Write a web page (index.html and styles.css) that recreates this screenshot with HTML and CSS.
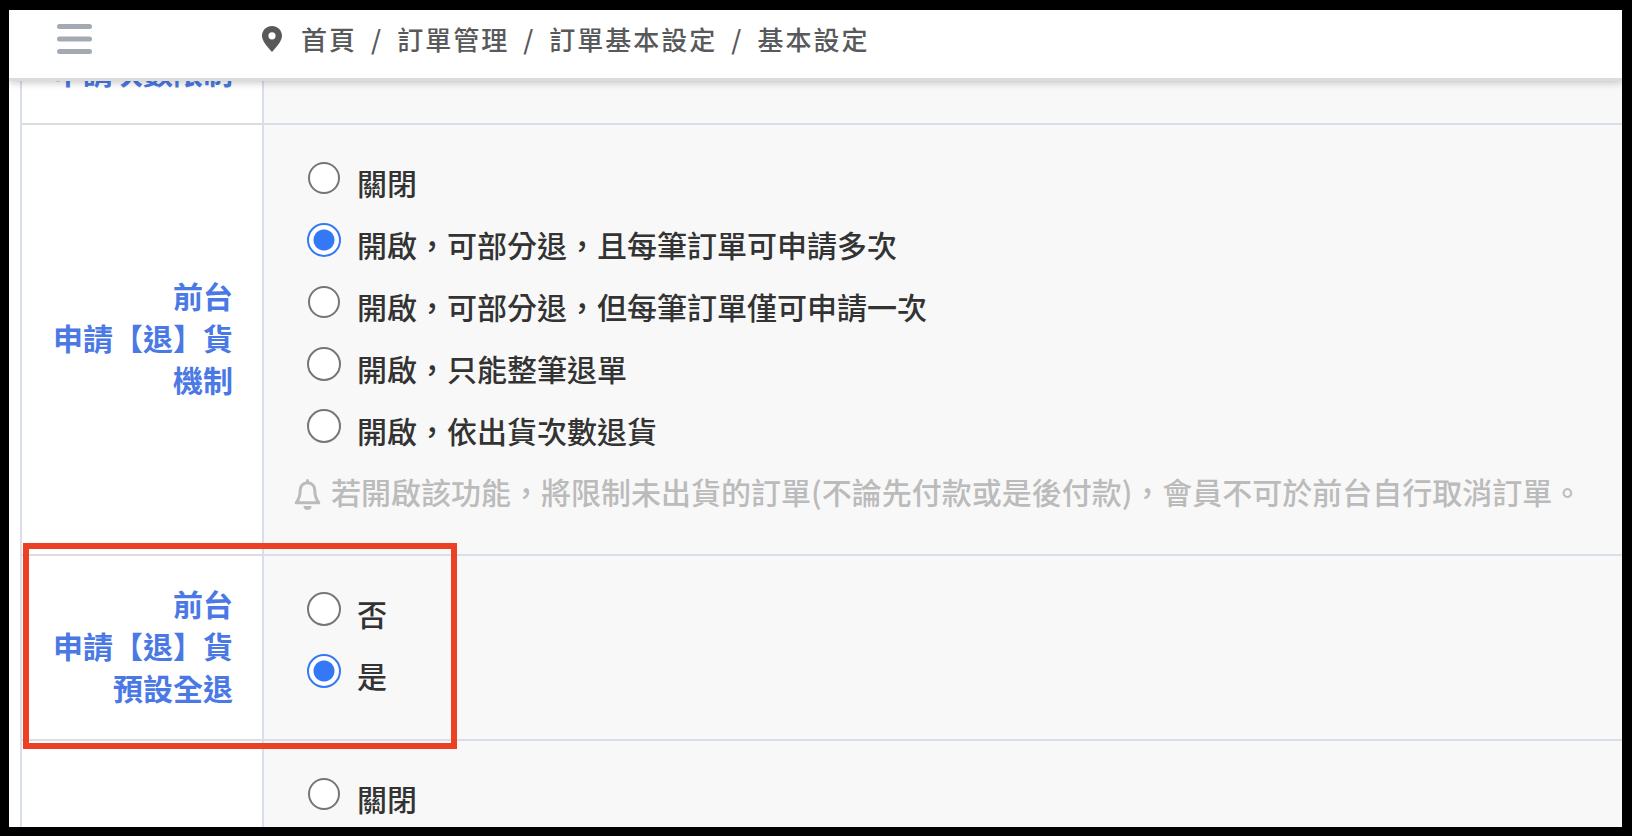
FILE: index.html
```html
<!DOCTYPE html>
<html lang="zh-Hant">
<head>
<meta charset="utf-8">
<title>基本設定</title>
<link rel="stylesheet" href="styles.css">
</head>
<body>
<div class="app">
  <header class="topbar">
    <button class="menu" type="button">
      <svg viewBox="0 0 35 30" width="35" height="30"><path d="M2.5 2.5h30M2.5 15h30M2.5 27.5h30" stroke="currentColor" stroke-width="5" stroke-linecap="round"/></svg>
    </button>
    <nav class="crumbs">
      <svg class="pin" viewBox="0 0 20 26" width="20" height="26"><path fill="currentColor" fill-rule="evenodd" d="M10 0C4.500 0 0 4.300 0 9.700 0 15 4.500 19.500 10 26c5.500-6.500 10-11 10-16.300C20 4.300 15.500 0 10 0Zm0 6.200a3.600 3.600 0 1 1 0 7.200 3.600 3.600 0 0 1 0-7.200Z"/></svg>
      <a href="#">首頁</a><span>/</span>
      <a href="#">訂單管理</a><span>/</span>
      <a href="#">訂單基本設定</a><span>/</span>
      <a href="#">基本設定</a>
    </nav>
  </header>
  <main class="content">
    <table class="settings">
      <tbody>
        <tr class="row-first">
          <th scope="row">申請次數限制</th>
          <td></td>
        </tr>
        <tr>
          <th scope="row">前台<br>申請【退】貨<br>機制</th>
          <td>
            <label class="option"><input class="small" type="radio" name="mode">關閉</label>
            <label class="option"><input type="radio" name="mode" checked>開啟，可部分退，且每筆訂單可申請多次</label>
            <label class="option"><input class="small" type="radio" name="mode">開啟，可部分退，但每筆訂單僅可申請一次</label>
            <label class="option"><input type="radio" name="mode">開啟，只能整筆退單</label>
            <label class="option"><input type="radio" name="mode">開啟，依出貨次數退貨</label>
            <p class="note">
              <svg viewBox="0 0 27 31" width="27" height="31"><path d="M13.500 3.800c-4.600 0-7.300 3.200-7.300 7.600 0 5.600-1.200 8.500-4 12.400h22.600c-2.800-3.900-4-6.800-4-12.400 0-4.400-2.700-7.600-7.300-7.600Z" fill="none" stroke="currentColor" stroke-width="3" stroke-linejoin="round"/><path d="M13.500 1.500v2" stroke="currentColor" stroke-width="3" stroke-linecap="round"/><path d="M9.500 27h8a4 4 0 0 1-8 0Z" fill="currentColor"/></svg>
              <span>若開啟該功能，將限制未出貨的訂單(不論先付款或是後付款)，會員不可於前台自行取消訂單。</span>
            </p>
          </td>
        </tr>
        <tr>
          <th scope="row">前台<br>申請【退】貨<br>預設全退<div class="highlight"></div></th>
          <td>
            <label class="option"><input type="radio" name="full">否</label>
            <label class="option"><input type="radio" name="full" checked>是</label>
          </td>
        </tr>
        <tr>
          <th scope="row"></th>
          <td>
            <label class="option"><input class="small" type="radio" name="next">關閉</label>
          </td>
        </tr>
      </tbody>
    </table>
  </main>
</div>
</body>
</html>
```
FILE: styles.css
```css
* { box-sizing: border-box; }

body {
  margin: 0;
  height: 100vh;
  padding: 10px 10px 9px 9px;
  background: #000;
  color: #333;
  font-family: "Noto Sans CJK TC", sans-serif;
  font-size: 30px;
  font-weight: 500;
  line-height: 42px;
}

.app {
  height: 100%;
  overflow: hidden;
  background: #fff;
}

.topbar {
  position: relative;
  z-index: 2;
  display: flex;
  align-items: center;
  height: 68px;
  padding: 0 48px 10px;
  background: #fff;
  box-shadow: 0 3px 0 #dcdcdc, 0 4px 8px rgba(0, 0, 0, 0.25);
}

.menu {
  display: flex;
  padding: 0;
  border: 0;
  background: none;
  color: #a3aab1;
}

.crumbs {
  display: flex;
  align-items: center;
  gap: 14px;
  margin-left: 170px;
  color: #58595b;
  font-size: 26px;
  letter-spacing: 2px;
}

.crumbs a {
  color: inherit;
  text-decoration: none;
}

.pin { margin-right: 5px; }

/* The list is scrolled partly under the top bar. */
.content {
  margin-top: -68px;
  padding-left: 11px;
}

.settings {
  width: 100%;
  table-layout: fixed;
  border-spacing: 0;
  border-left: 2px solid #d9dfea;
}

.settings th {
  position: relative;
  width: 242px;
  padding: 25px 29px 31px;
  border-right: 2px solid #d9dfea;
  border-bottom: 2px solid #ddd;
  color: #4a78e4;
  font-weight: 700;
  text-align: right;
  white-space: nowrap;
}

.settings td {
  padding: 29px 30px 30px;
  border-bottom: 2px solid #d9dfea;
  background: #f8f8f8;
}

.settings .row-first th {
  height: 115px;
  vertical-align: bottom;
}

.option {
  display: flex;
  align-items: center;
  gap: 16px;
  height: 62px;
  padding: 0 0 6px 13px;
}

.option input {
  appearance: none;
  width: 34px;
  height: 34px;
  margin: 0 0 8px;
  border: 2px solid #767676;
  border-radius: 50%;
  background: #fff;
}

.option .small {
  width: 32px;
  height: 32px;
  margin: 0 1px 8px;
}

.option input:checked {
  border-color: #3478f6;
  background: radial-gradient(circle, #3478f6 10px, #fff 11px);
}

.note {
  display: flex;
  align-items: center;
  gap: 10px;
  height: 60px;
  margin: 0;
  color: #bbb;
  white-space: nowrap;
}

.note span { padding-bottom: 6px; }

.highlight {
  position: absolute;
  top: -13px;
  left: 1px;
  z-index: 1;
  width: 434px;
  height: 206px;
  border: 6px solid #eb4024;
}
```
